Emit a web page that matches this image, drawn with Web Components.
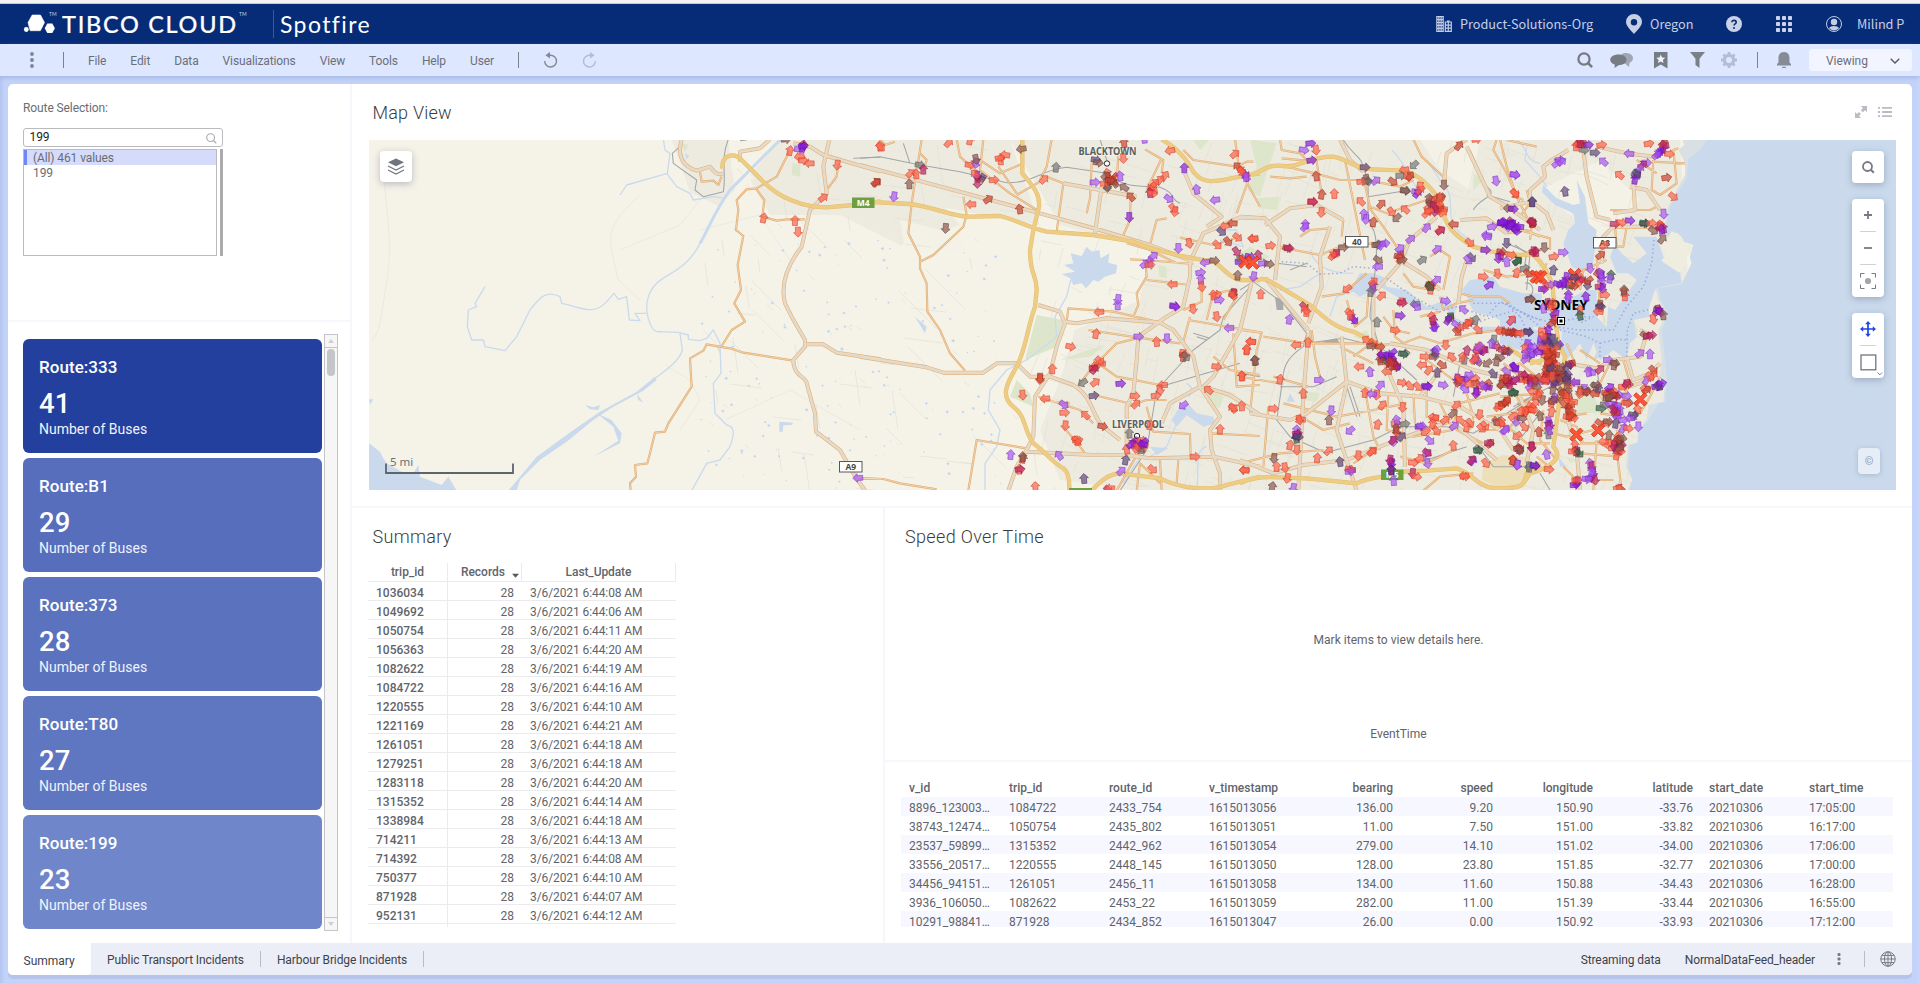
<!DOCTYPE html>
<html lang="en">
<head>
<meta charset="utf-8">
<title>Spotfire</title>
<style>
html,body{margin:0;height:100%;overflow:hidden}
body{font-family:Roboto,"Liberation Sans",sans-serif;font-size:12px;color:#61646b}
</style>
</head>
<body>
<spotfire-app></spotfire-app>
<script>
const define = (name, render, after) => customElements.define(name, class extends HTMLElement {
  connectedCallback() {
    if (this.shadowRoot) return;
    const t = document.createElement('template');
    t.innerHTML = render(this);
    this.attachShadow({mode: 'open'}).appendChild(t.content.cloneNode(true));
    if (after) after(this.shadowRoot, this);
  }
});

/* ---------- icons ---------- */
const ICONS = {
  logo: ['0 0 31 20', '<g fill="#fff"><circle cx="2.3" cy="15.500" r="2.400"/><path d="M8.2 1h8.300l4 7.6-2.200 4.300-2 3.800H6.2L4 8.6z" stroke="#fff" stroke-width=".6" stroke-linejoin="round"/><path d="M23.3 9.400h5l2.6 4.800-2.600 4.800h-5l-2.600-4.800z" stroke="#062c78" stroke-width="1" paint-order="stroke"/></g>'],
  kebab: ['0 0 4 16', '<g fill="#7f838d"><circle cx="2" cy="2" r="1.9"/><circle cx="2" cy="8" r="1.9"/><circle cx="2" cy="14" r="1.9"/></g>'],
  kebabSm: ['0 0 4 12', '<g fill="#777a80"><rect x=".5" width="3" height="3" rx="1"/><rect x=".5" y="4.5" width="3" height="3" rx="1"/><rect x=".5" y="9" width="3" height="3" rx="1"/></g>'],
  undo: ['0 0 14 16', '<path d="M5 3.2H7.6A5.9 5.9 0 1 1 1.7 9" fill="none" stroke="#858993" stroke-width="1.4"/><path d="M7 0v6.4L2.4 3.2z" fill="#858993"/>'],
  redo: ['0 0 14 16', '<path d="M9 3.2H6.4A5.9 5.9 0 1 0 12.3 9" fill="none" stroke="#b5bdd2" stroke-width="1.4"/><path d="M7 0v6.4l4.6-3.2z" fill="#b5bdd2"/>'],
  org: ['0 0 16 16', '<g fill="none" stroke="#c3cde3" stroke-width="1.2"><path d="M.8 15.4V.7h6.4v14.7zM.8 3.6h6.4M.8 6.5h6.4M.8 9.4h6.4M.8 12.3h6.4M2.9 .7v14.7M5.1 .7v14.7"/><path d="M9.3 15.4V6h6v9.4zM9.3 9.2h6M9.3 12.2h6M12.3 6v9M11 5.2h2.6"/></g>'],
  pin: ['0 0 16 20', '<path d="M8 0a8 8 0 0 1 8 8c0 4-5.500 9-8 12C5.500 17 0 12 0 8a8 8 0 0 1 8-8zm0 5a3.200 3.200 0 1 0 0 6.400A3.200 3.200 0 0 0 8 5z" fill="#c6cfe4"/>'],
  help: ['0 0 16 16', '<circle cx="8" cy="8" r="8" fill="#c9d2e6"/><path d="M5.800 6.200C5.800 3.700 10.200 3.800 10.200 6.200 10.200 7.900 8 7.700 8 9.600" fill="none" stroke="#062c78" stroke-width="1.600"/><circle cx="8" cy="12" r="1" fill="#062c78"/>'],
  apps: ['0 0 16 16', '<g fill="#c9d2e6">' + [0,6,12].map(y => [0,6,12].map(x => `<rect x="${x}" y="${y}" width="4" height="4" rx=".8"/>`).join('')).join('') + '</g>'],
  user: ['0 0 16 16', '<circle cx="8" cy="8" r="7.500" fill="none" stroke="#c3cde3"/><circle cx="8" cy="6" r="3.200" fill="#c3cde3"/><path d="M3 12.300c1.500-3 8.500-3 10 0A7 7 0 0 1 3 12.300z" fill="#c3cde3"/>'],
  searchBold: ['0 0 16 16', '<circle cx="7" cy="7" r="5.600" fill="none" stroke="#777b84" stroke-width="2.300"/><path d="M10.800 10.800l4.300 4.300" stroke="#777b84" stroke-width="2.600"/>'],
  chat: ['0 0 24 16', '<path d="M15.500 1c4.500 0 7.500 2.200 7.500 5.200 0 2-1.500 3.600-3.400 4.500L19 15l-4-3.500c-3-.2-5-4-5-6C10 2.500 13 1 15.500 1z" fill="#a0a6b4"/><path d="M8.500 2.400c4.600 0 8 2.200 8 5.400s-3.400 5.400-8 5.400l-4 2.800.4-3.300C2 11.800.2 10 .2 7.800c0-3.200 3.700-5.400 8.300-5.400z" fill="#777b84"/>'],
  bookmark: ['0 0 14 17', '<path d="M0 0h13.500v16.500L6.750 12.600 0 16.500z" fill="#777b84"/><path d="M6.750 2.500l1.300 3 3.200.3-2.400 2.100.7 3.200-2.800-1.700-2.800 1.700.7-3.200L2.300 5.800l3.200-.3z" fill="#eef2ff"/>'],
  funnel: ['0 0 15 16', '<path d="M0 0h15L9.500 6.800V16L5.500 13V6.800z" fill="#7b7f88"/>'],
  gear: ['0 0 16 16', '<circle cx="8" cy="8" r="4.600" fill="none" stroke="#b3bdd3" stroke-width="3.200"/><path d="M8 0v3M8 13v3M0 8h3M13 8h3M2.400 2.400l2 2M11.600 11.600l2 2M2.400 13.600l2-2M11.600 4.400l2-2" stroke="#b3bdd3" stroke-width="2.800"/>'],
  bell: ['0 0 14 17', '<path d="M7 0c4 0 5.500 3 5.500 6v4.500L14 12v1.500H0V12l1.500-1.500V6C1.500 3 3 0 7 0zM4.500 14.700h5c-.5 1.700-4.500 1.700-5 0z" fill="#868b98"/>'],
  chevron: ['0 0 10 6', '<path d="M.7.7L5 5 9.300.7" fill="none" stroke="#575b63" stroke-width="1.400"/>'],
  expand: ['0 0 12 12', '<g fill="#b9bcc2"><path d="M6 0h6v6L10 4.200 7.900 6.300 5.800 4.200 7.900 2z"/><path d="M0 12V6l2 1.900 1.900-2L6 8l-2 2 2 2z"/></g>'],
  list: ['0 0 14 10', '<g fill="#b9bcc2"><path d="M0 0h2v1.800H0zM4 0h10v1.800H4zM0 4.100h2v1.800H0zM4 4.100h10v1.800H4zM0 8.200h2V10H0zM4 8.200h10V10H4z"/></g>'],
  search: ['0 0 11 11', '<circle cx="4.600" cy="4.600" r="3.900" fill="none" stroke="#a7a9ad" stroke-width="1.100"/><path d="M7.500 7.500l2.800 2.800" stroke="#a7a9ad" stroke-width="1.200"/>'],
  mapSearch: ['0 0 13 13', '<circle cx="5.500" cy="5.500" r="4.500" fill="none" stroke="#777a82" stroke-width="1.800"/><path d="M8.800 8.800l3 3" stroke="#777a82" stroke-width="2"/>'],
  layers: ['0 0 16 17', '<path d="M8 .5l8 3.800-8 3.900-8-3.900z" fill="#6f747e"/><path d="M0 8l8 4 8-4M0 12l8 4 8-4" fill="none" stroke="#6f747e" stroke-width="1.200"/>'],
  plus: ['0 0 8 8', '<path d="M4 0v8M0 4h8" stroke="#777a82" stroke-width="1.800"/>'],
  minus: ['0 0 8 8', '<path d="M0 4h8" stroke="#777a82" stroke-width="1.800"/>'],
  target: ['0 0 16 16', '<circle cx="8" cy="8" r="3.100" fill="#a3a6ac"/><path d="M.5 4.500v-4h4M11.500.5h4v4M15.500 11.500v4h-4M4.500 15.500h-4v-4" fill="none" stroke="#777a82"/>'],
  move: ['0 0 16 16', '<path d="M8 1v14M1 8h14" stroke="#1f46e8" stroke-width="1.700"/><path d="M8 0l2.800 3.200H5.200zM8 16l2.800-3.200H5.200zM0 8l3.200-2.800v5.600zM16 8l-3.200-2.800v5.600z" fill="#1f46e8"/>'],
  square: ['0 0 22 22', '<rect x="1" y="1" width="14.800" height="14.800" fill="none" stroke="#666a73" stroke-width="1.200"/><path d="M17.500 18.500l2.300 2.300 2.300-2.300" fill="none" stroke="#777a82"/>'],
  globe: ['0 0 16 16', '<g fill="none" stroke="#777a80" stroke-width="1"><circle cx="8" cy="8" r="7.200"/><ellipse cx="8" cy="8" rx="3.500" ry="7.200"/><path d="M8 .8v14.400M.8 8h14.400M2 4.400h12M2 11.600h12"/></g>'],
  sort: ['0 0 8 5', '<path d="M0 .5h8L4 5z" fill="#555960"/>']
};
define('ui-icon', el => {
  const [vb, body] = ICONS[el.getAttribute('name')];
  const [, , w, h] = vb.split(' ');
  return `<style>:host{display:inline-block;flex:none;line-height:0}svg{display:block;overflow:visible}</style>
  <svg width="${el.getAttribute('w') || w}" height="${el.getAttribute('h') || h}" viewBox="${vb}">${body}</svg>`;
});

/* ---------- brand bar ---------- */
define('brand-bar', () => `<style>
:host{display:flex;align-items:center;height:40px;background:#062c78;color:#c6cfe4;font:12.700px/20px "Noto Sans CJK SC","Open Sans",sans-serif;box-sizing:border-box;padding-left:24px;white-space:nowrap}
.tm{font:5px/6px Lato,sans-serif;align-self:flex-start;margin-top:7px;width:8px}
.name{font:500 23.5px/30px Lato,sans-serif;color:#fff;width:177px;letter-spacing:1.7px;-webkit-text-stroke:.2px #fff}
.rule{width:1px;height:28px;background:#3a589a;margin:0 6px 0 26px}
.prod{font:400 23px/34px Lato,sans-serif;color:#fff;letter-spacing:1.4px}
.sp{flex:1}
.right{display:flex;align-items:center;width:484px}
.right span{flex:none}
</style>
<ui-icon name="logo"></ui-icon><span class="tm" style="width:8px;margin-left:-6px">TM</span><span class="name" style="margin-left:5px">TIBCO CLOUD</span><span class="tm">TM</span><span class="rule"></span><span class="prod">Spotfire</span><span class="sp"></span>
<div class="right"><ui-icon name="org"></ui-icon><span style="margin-left:8px;width:166px">Product-Solutions-Org</span><ui-icon name="pin"></ui-icon><span style="margin-left:8px;width:76px">Oregon</span><ui-icon name="help"></ui-icon><ui-icon name="apps" style="margin-left:34px"></ui-icon><ui-icon name="user" style="margin-left:34px"></ui-icon><span style="margin-left:15px">Milind P</span></div>`);

/* ---------- menu bar ---------- */
define('menu-bar', () => `<style>
:host{display:flex;align-items:center;height:32px;background:#dde7ff;color:#6b6f79;font-size:12px;box-sizing:border-box;padding:0 8px 0 30px;box-shadow:0 1px 5px rgba(90,115,180,.35);position:relative}
.rule{width:1px;height:16px;background:#7d8290}
nav{display:flex;gap:24px;margin:2px 24px 0 24px;letter-spacing:-.12px}
.sp{flex:1}
.view{display:flex;align-items:center;justify-content:space-between;width:103px;height:22px;box-sizing:border-box;padding:2px 12px 0 17px;background:#f2f5ff;border-radius:3px;margin-left:18px;letter-spacing:-.05px}
</style>
<ui-icon name="kebab"></ui-icon><span class="rule" style="margin-left:29px"></span>
<nav><span>File</span><span>Edit</span><span>Data</span><span>Visualizations</span><span>View</span><span>Tools</span><span>Help</span><span>User</span></nav>
<span class="rule"></span><ui-icon name="undo" style="margin-left:24px"></ui-icon><ui-icon name="redo" style="margin-left:26px"></ui-icon><span class="sp"></span>
<ui-icon name="searchBold"></ui-icon><ui-icon name="chat" style="margin-left:17px"></ui-icon><ui-icon name="bookmark" style="margin-left:20px"></ui-icon><ui-icon name="funnel" style="margin-left:22px"></ui-icon><ui-icon name="gear" style="margin-left:16px"></ui-icon><span class="rule" style="margin-left:20px"></span><ui-icon name="bell" style="margin-left:19px"></ui-icon>
<div class="view"><span>Viewing</span><ui-icon name="chevron"></ui-icon></div>`);

/* ---------- route filter ---------- */
define('route-filter', () => `<style>
:host{display:block;box-sizing:border-box;padding:16px 15px 0;letter-spacing:-.1px}
.t{line-height:16px;color:#6a6d73}
.in{display:flex;align-items:center;justify-content:space-between;box-sizing:border-box;width:200px;height:19px;margin-top:12px;border:1px solid #b9bbbf;border-radius:3px;padding:0 5.500px;color:#222;line-height:17px}
.row{display:flex;margin-top:2px;gap:3px}
.list{box-sizing:border-box;width:194px;height:107px;border:1px solid #b9bbbf;line-height:16px;color:#6a6d73}
.list div{padding-left:6px;border-left:3px solid transparent;height:15px}
.list .on{background:#d5dbfa;border-color:#7086f2}
.bar{width:3px;background:#ababab}
</style><div class="t">Route Selection:</div><div class="in"><span>199</span><ui-icon name="search" style="margin-top:1px"></ui-icon></div>
<div class="row"><div class="list"><div class="on">(All) 461 values</div><div>199</div></div><div class="bar"></div></div>`);

/* ---------- KPI tile ---------- */
define('kpi-card', el => `<style>
:host{display:block;height:114px;box-sizing:border-box;border-radius:6px;color:#fff;padding:17px 16px 0;background:${el.getAttribute('tint')}}
.a{font-weight:500;font-size:17px;line-height:22px;letter-spacing:.05px}.b{font-weight:500;font-size:27.500px;line-height:32px;margin-top:10px}.c{font-size:14px;line-height:18px;color:#f0f3fb;margin-top:0}
</style><div class="a"><slot name="route"></slot></div><div class="b"><slot name="value"></slot></div><div class="c">Number of Buses</div>`);

define('kpi-list', () => `<style>
:host{display:flex;gap:2px;padding:12px 0 0 15px;align-items:flex-start}
.cards{display:grid;gap:5px;width:299px;margin-top:5px}
.sb{display:flex;flex-direction:column;width:14px;height:597px;box-sizing:border-box;border:1px solid #c4c5c8;background:#f6f6f7}
.btn{display:flex;align-items:center;justify-content:center;height:12px;flex:none}
.up{border-bottom:1px solid #c4c5c8}.dn{border-top:1px solid #c4c5c8;margin-top:auto}
.th{width:8px;height:27px;border-radius:4px;background:#c4c6ca;margin:1px auto 0}
</style><div class="cards">` +
[['333',41,'#23409e'],['B1',29,'#576ebc'],['373',28,'#5b72be'],['T80',27,'#5f76c0'],['199',23,'#6f86ca']].map(([r,v,c]) => `<kpi-card tint="${c}"><span slot="route">Route:${r}</span><span slot="value">${v}</span></kpi-card>`).join('') +
`</div><div class="sb"><div class="btn up"><svg width="6" height="4"><path d="M3 0l3 4H0z" fill="#cfcfd2"/></svg></div><div class="th"></div><div class="btn dn"><svg width="6" height="4"><path d="M3 4l3-4H0z" fill="#cfcfd2"/></svg></div></div>`);

/* ---------- map geometry: four tiles, each in thirds of a pixel ---------- */
const TILE = {A: 360, B: 860, C: 1240, D: 1500};
const inTile = (k, body) => `<g transform="translate(${TILE[k]} 130) scale(.33333)">${body}</g>`;
const MAJOR = {
A: ['M1087 115C1085 75 1120 65 1145 90L1210 155C1260 205 1330 232 1400 232L1480 225 1562 214'],
B: ['M0 214L150 222C220 230 280 262 330 260L420 258C470 270 510 295 560 305L700 315 820 335C880 360 960 380 1060 395 1090 410 1100 440 1140 450L1200 450',
'M487 28L487 130C520 170 540 190 537 230L520 300 510 360C510 440 530 430 530 480L525 530C500 600 500 650 470 710 440 760 420 800 460 830 500 860 490 900 520 940 560 970 580 1000 610 1015Q630 1030 628 1082',
'M905 28C960 60 980 90 1000 125 1040 180 1100 140 1200 130','M695 1082Q740 1030 780 1030L900 1045C960 1075 1050 1085 1100 1065L1200 1040'],
C: ['M60 447L80 448C120 470 160 495 210 525 260 570 290 595 340 605L400 635 430 655','M40 130C60 130 80 100 130 108 180 115 200 80 280 80 330 90 340 115 400 118L490 122C540 135 580 180 605 220 610 290 650 320 700 350 760 370 830 380 880 372L905 400','M0 1060C60 1030 120 1045 200 1045L350 1060C390 1040 430 1045 490 1025L560 1022 650 1015C700 1030 710 1075 780 1075 860 1075 850 1060 860 1030L900 1000','M800 650L860 690 905 700'],
D: ['M95 370C130 400 150 440 158 470L165 560 175 640 195 680 180 800 160 950C190 980 160 1010 90 1030L70 1060','M90 700L130 690 175 650']};
const ART = {
A: ['M965 28C950 80 970 110 1010 122L1050 110Q1070 140 1090 130','M1408 28L1390 110 1400 190 1350 240 1325 350C1270 420 1265 480 1275 520L1295 560 1335 630 1335 650 1300 690C1300 740 1340 740 1340 760L1365 850 1368 905 1440 960 1480 1030 1515 1082','M1340 643L1390 643 1430 668 1562 688','M1300 40L1350 50 1390 75 1562 125','M1140 95L1140 65 1200 55 1230 28'],
B: ['M0 680L200 712 250 728 370 728 410 700 470 700 510 740 570 740 640 765C700 800 700 870 730 890L780 930','M0 105L150 145 540 250 720 300 870 345 1000 395','M520 920L525 800 570 730 590 650 615 580 600 545 535 525','M615 575L650 580 740 565 900 578 940 600 1000 680 1020 770','M500 965L700 975 800 975 870 985 1060 980 1200 1010','M835 620L830 690 820 790 800 830 800 960','M835 620L920 560 970 530 990 440 990 395 1030 310 1140 262 1200 265','M445 1082L470 1010 500 960 520 920','M725 170L705 310','M975 130L1000 190 1085 260 1040 290','M1020 770L930 820 905 880','M1020 770L1080 860 1050 900 1055 960 1080 1030 1080 1082','M1175 455L1140 600 1060 740 1030 770 1110 795 1200 855','M610 160L720 180 830 200'],
C: ['M0 260L75 265 120 320 105 450','M75 285L150 235 230 225 310 270','M270 290L240 380 245 470 205 580','M205 610L190 800 175 1082','M75 445L205 600','M305 620L320 760 290 900 350 1082','M400 490L400 620 490 830 495 1010','M320 755L200 850 150 870 30 850','M190 1005L320 990 470 930 640 870','M680 28L620 70 612 160','M680 50L750 200 810 235 900 300','M480 390L560 440 600 480','M410 480L480 400 510 330 590 260','M300 28L330 90 370 125','M450 640L560 660 700 720 780 740','M320 755L420 790 540 800 600 720','M0 990L100 1030 190 1005','M540 800L660 830 780 900 820 960','M660 270L740 265 800 310','M655 520L665 440 680 390','M640 880L700 930 770 990'],
D: ['M0 235L90 215 90 180 135 140 130 110 155 90 205 60','M95 215L140 250 160 300','M250 60L260 140 290 260 330 270','M290 50L380 70 460 80 500 50','M400 150L405 240 340 250','M390 170L440 180 480 240','M305 400L310 320 340 290 480 290','M200 700L290 715 340 690 420 680 440 610 420 600','M380 680L400 750 450 730','M190 750L300 790 350 870 360 960','M205 760L200 860 230 960 240 1082','M350 780L420 760 480 700','M60 800L100 900 80 1000','M0 740L80 750 170 740']};
const MINOR = {
A: ['M1190 175L1160 178 1130 210 1135 240 1128 300 1150 318 1133 405 1143 480 1123 520 1155 575 1115 600 1085 648','M1300 692L1150 668 1110 655 1040 643 1030 662 990 685 995 770 925 880 915 905 885 908 870 970 862 1000 825 1005 828 1040 810 1060 812 1082','M1190 178L1213 210 1207 260 1250 272 1280 268 1335 268','M1190 175L1250 140 1290 60','M1020 125L1025 155 1060 152 1075 165 1085 140','M1400 180L1430 140 1435 100','M1505 1045L1562 1047'],
B: ['M185 28L155 220 145 310 180 380 180 415 200 460 202 545 240 600 270 670 315 722','M180 395L220 375 310 290 320 255 310 200','M0 1045L70 1047 120 1060 230 1078','M325 1082L350 930 500 955','M60 28L75 45 105 35','M290 28L300 80 355 130','M370 28L360 120 450 190 530 240','M360 90L420 130 490 100','M575 28L560 110 540 150','M560 140L610 160 590 305','M470 195L540 155','M775 70L770 170','M695 100L690 205 680 250','M855 58L910 90 905 130','M812 200L810 270 790 315','M920 265L890 270 870 345','M810 388L855 390 1000 402','M855 390L860 440 830 490 835 525 820 560','M860 450L990 465','M620 575L625 535 760 545 890 575','M685 600L850 625 960 640','M655 765L700 710 770 640 830 625','M700 690L770 740 900 765','M700 795L830 825','M535 800L660 840 700 880','M545 810L630 820','M610 890L660 950 675 970','M800 830L860 810 920 810','M860 830L880 905 990 912 992 980','M1050 910L1200 918','M970 540L1025 515 1025 440','M985 570L1200 607','M1040 570L1060 490 1120 480','M1090 570L1130 500','M830 1082L840 1000 900 1060','M950 1060L955 990','M970 60L1000 90 1130 110 1160 95 1180 95','M1125 28L1135 100 1165 150 1130 250','M800 340L870 360 950 400','M905 85L860 180','M1120 610L1130 770 1200 765','M1060 680L1110 720 1200 735','M770 1082L810 1010 840 960','M960 323L1060 345 1140 320','M415 110L470 190','M180 70L200 90 190 125','M970 635L990 560','M900 990L905 1082'],
C: ['M120 28L125 60 180 70 200 90','M125 85L230 95 245 190','M130 108L225 130 300 150 380 150 480 170 520 150','M310 270L305 320','M90 140L150 145 200 140','M0 120L60 230','M110 350L240 375 300 350 400 340','M180 320L210 300 270 295','M315 90L375 390','M375 165L390 230 440 250 560 210','M385 230L430 290 470 350','M520 28L545 80 620 150','M770 28L760 60 800 130 830 200 850 210','M245 500L310 490 380 430','M320 510L345 590 380 560 385 490','M0 600L65 608 50 660 30 850','M70 620L200 640','M215 600L225 680 240 740','M100 740L205 770','M210 600L215 640 400 640','M130 820L290 860 400 840 500 820','M85 830L70 1010','M0 740L120 760','M340 680L380 650 470 640','M300 650L400 700','M375 780L400 920 420 960','M445 790L440 900 520 920 640 900','M520 790L525 880','M560 780L560 860 620 880','M640 820L650 900 730 940','M460 540L465 620 490 640 540 620 600 640','M430 560L460 600 510 610','M600 500L610 540 650 520 700 510','M600 640L700 610 780 600','M560 690L640 750','M600 820L640 900','M655 820L780 790','M680 790L700 860 690 900','M740 860L820 850 900 780','M720 900L800 900 860 840','M540 560L600 545','M490 430L520 470 580 480','M600 360L630 380 610 480','M570 380L600 360','M730 420L800 440 900 430','M800 310L860 300 900 320','M860 180L870 220 840 260','M660 490L700 500 780 500 810 520','M0 1000L120 970 250 960','M200 870L250 900 330 880','M340 1000L400 960','M480 980L560 1000 640 960','M550 1082L600 1040 700 1030'],
D: ['M0 28L20 110 50 200 95 290 90 330','M460 90L455 180 480 195 530 160 520 60 535 55','M455 95L555 100','M345 290L350 350 370 350 380 290','M330 240L450 240 470 230','M20 290L150 325 150 360','M200 640L225 700','M240 660L300 700','M410 90L470 130','M370 690L390 760 350 850','M300 850L370 860','M200 860L260 850','M240 940L350 940','M80 830L150 870','M0 870L80 940 150 940','M110 980L160 1020','M190 1010L230 1050 340 1050','M350 960L365 1082','M290 930L280 1082','M240 970L360 980','M30 760L60 820','M0 720L60 700 110 740','M10 700L60 740','M290 380L300 540','M120 440L140 400','M240 480L250 420 320 390','M20 30L110 50','M0 800L130 790','M300 760L330 700','M480 740L450 800 420 850','M120 900L200 920 280 900','M180 870L230 890 250 940','M130 840L120 930 170 990']};
const RAIL = {
A: ['M1105 28C1080 90 1100 130 1090 185L1030 200 1005 180 1010 150 940 100 937 70 960 50','M1480 85L1562 82','M1140 32L1160 30'],
B: ['M0 85L60 80 180 105 300 125 440 158C520 160 540 120 620 112L740 130C800 180 850 165 900 172 950 190 930 210 960 220','M130 40L150 100','M720 28L740 90','M780 1082L860 960 890 780 1000 660 1080 600 1090 560 1175 465','M900 770L1140 700','M1140 730L1200 740','M1000 610L1050 625M1010 620L1040 630'],
C: ['M0 480L40 455 130 520 200 610 190 650C130 690 130 720 125 770L110 870 150 920 250 965','M200 640L310 625 420 650 530 750','M310 30C340 80 370 80 370 120 C400 150 370 260 395 290C430 340 390 500 390 560L415 640','M385 200L450 190 510 180','M110 400L200 410M150 420L200 400','M690 60L740 170C780 200 720 200 700 240','M740 195L810 215','M250 970L400 930 480 890 620 890 700 910 900 790','M320 770L350 860M330 770L360 860','M530 1000L680 950','M120 770L220 770 290 740','M800 340L870 370 860 480','M660 700L640 800M700 930L760 1010 900 1010'],
D: ['M45 345L80 370 75 400','M75 460C100 450 110 500 80 500','M40 830L150 770','M50 940L120 850','M290 720L300 770','M120 1030L150 1080']};
const WATER_LINE = {
A: ['M1260 30L1180 110 1110 180C1060 250 1050 290 1020 340 980 420 920 430 890 460 860 490 855 530 865 565 875 600 885 607 900 605L955 607 985 615 985 628 1020 632 1040 625 1060 600 1080 640 1083 730 1060 760 1065 850 1100 885C1130 890 1120 920 1110 950L1080 990 1040 1000 995 1082','M375 470L345 520 350 530 325 540 322 590 335 630 370 630 375 650 435 662 470 620 510 540C540 500 560 480 600 500L605 520C660 530 700 560 740 515L762 490 775 508 800 500 808 570 840 572 825 550 858 550','M960 610L967 660C960 690 920 720 885 745','M910 28L915 60 930 70 922 130 800 165 780 195','M920 130L950 170 990 190 1000 210 1060 200 1095 205'],
B: ['M632 450L620 500 585 560 590 620 500 690 440 720 390 780 385 840 420 900 410 950 375 1000 375 1082','M980 760Q1010 780 985 800M870 980L920 950 950 880','M1060 300L1130 300 1150 350 1080 330','M1040 950C1000 960 1020 1010 1010 1082','M790 1060L840 980'],
C: ['M455 60C490 90 500 130 540 190M560 90L600 150C650 200 620 230 640 290L700 340','M340 430C240 430 220 390 210 360','M240 430L180 470 120 480','M900 100C850 90 870 60 830 28','M270 560L290 500 350 480'],
D: ['M80 50L75 90 120 140 140 170']};
const WATER_FILL = {
A: ['M445 1082L530 980 640 900 720 845 830 785 885 740 890 750 850 782 760 830 700 870 620 935 540 990 480 1050 470 1082Z','M710 850L755 870 785 910 780 940 700 980 775 932 760 890Z','M27 940L60 965 70 985 80 1000 125 1025 160 1030 175 1005 180 1040 245 1065 265 1040 290 1082 27 1082Z','M27 808L40 808 30 825Z','M675 825L700 832 720 825 715 840 690 838Z','M830 790L850 818 835 810Z','M1258 875L1300 878 1295 885 1270 886 1268 905 1258 905Z','M975 70L988 78 980 88Z'],
B: ['M605 432L645 425 612 405 640 400 632 370 665 378 680 350 695 365 718 360 722 385 748 370 745 398 772 405 768 430 735 440 715 455 700 450 678 475 665 460 640 465 630 445Z','M935 870Q960 820 985 822L1010 850 1060 860 1065 880 1030 890 980 855 950 890Z','M165 560L200 590 195 610Z','M870 950L925 955 890 975Z'],
C: ['M360 430L400 430 430 440 440 470 500 480 560 530 620 510 650 530 640 560 700 590 760 590 900 600 905 640 850 640 800 630 780 605 720 610 690 590 660 600 620 540 540 540 470 500 420 470 360 500 330 480Z','M690 450L760 440 780 470 850 490 905 490 905 590 820 590 760 560 700 545 680 500 665 480Z','M150 790L165 815 140 815Z','M800 640L880 620 870 660Z'],
D: ['M0 505L60 530 120 560 180 520 260 480 290 480 290 560 320 590 325 530 345 540 410 450 385 430 350 430 330 380 345 345 365 370 400 400 440 370 400 320 470 320 490 380 540 420 545 460 490 470 465 480 445 540 450 560 400 570 410 620 390 640 380 690 340 660 300 690 280 640 260 690 240 640 200 690 185 640 185 600 100 590 100 620 60 600 0 600Z','M130 165L170 205 220 225 240 220 230 150 255 200 265 280 290 300 280 400 250 430 215 410 190 340 205 300 225 280 220 250 165 225 125 185Z','M280 690L300 640 330 670Z','M0 590L90 600 110 640 60 660 0 640Z','M175 980L200 1010 180 1010Z']};
const GREEN = {
A: ['M1297 100L1322 105 1320 140 1295 135Z','M1070 650L1082 655 1078 672Z','M960 40L985 45 975 65Z'],
B: ['M530 555L610 570 590 650 495 690Z','M470 750L450 800 520 830 510 790Z','M600 690L700 655 735 645 690 680Z','M1050 780L1090 800 1080 835 1040 820Z','M895 405L920 410 920 445 898 440Z','M1000 30L1050 28 1020 60Z'],
C: ['M30 28L110 40 80 130 60 200 20 180 50 110Z','M50 205L120 200 110 240 60 235Z','M0 370L30 350 90 380 60 400Z','M340 620L380 600 395 640Z','M180 780L240 790 230 815 190 810Z','M700 130L730 150 700 180Z'],
D: ['M230 800L280 785 300 850 230 850Z','M400 560L415 610 400 600Z','M30 880L60 880 50 910 35 905Z','M305 530L320 580 310 580Z','M200 980L230 990 210 1000Z']};
const FERRY = {C: ['M125 395L200 400 240 432 300 430 340 410 400 415','M440 445L520 500 600 545 650 530 740 560 780 515 850 550 900 590','M650 600L760 560 830 540 900 570','M700 520L800 520 840 560'],
D: ['M462 330L455 400 430 470 380 530 340 600 240 600 160 590','M20 520L90 560 160 580','M380 680L382 600 400 550 450 538','M180 600L260 620 300 640 300 680','M300 640L350 628 380 630','M180 575L250 560 280 560 240 580','M60 560L80 600 60 640']};

/* vehicles: colour, heading, x, y  (n e s w, a=NE b=SE c=SW d=NW) */
const BUS = {
A: 'rn1290,62 mn1330,45 pe1318,58 Pn1328,52 Pe1330,48 rw1318,80 re1330,92 rw1348,100 be1278,28 rs1432,105 ra1390,203 Ra1550,157 rn1560,48 rn1211,264 rn1305,272 rs1314,306 pw1494,1044',
B: 'rb62,52 ra266,38 rn330,30 ge180,105 mn190,118 ra152,130 rn168,132 Ra48,157 bn148,162 ps102,200 bs257,295 Ra385,208 rw333,223 Rn479,237 re330,105 ps348,100 bs348,88 ke365,142 be362,148 Ps352,138 ms352,160 re402,150 rd345,132 rw435,75 rn422,90 re420,84 bw484,57 ra552,148 gn588,112 ke708,90 be715,98 pe705,157 rn742,130 mn745,150 Xn755,147 gs742,172 bs742,168 pn780,138 re735,160 bd792,172 rs790,85 Rn792,38 pn853,25 Rd812,200 Ps808,262 ra915,137 ra900,150 ra885,160 rc875,170 rb880,180 mn870,188 re878,190 pb927,206 rb940,235 rs945,245 ps955,355 rs988,340 pa880,378 pa855,402 pn870,395 re870,405 rw930,62 Pn973,114 pn1010,178 pw1065,210 ra1125,72 Rd1133,110 mb1155,132 rd1145,122 pd1158,140 kb1085,305 rw1095,288 Rw1117,280 rb1133,322 rw1178,326 Rb1104,335 rb1072,345 pw1035,397 be1064,392 bn1133,436 mb1130,365 Pe1140,395 ms1120,490 ge1145,385 pe1022,428 pn1023,448 rs1025,470 rw937,463 pn773,525 ps774,508 pe943,527 Pe945,530 rs999,537 rs1070,560 rw717,546 rn708,611 pe836,620 rn890,635 ps921,626 re632,650 rd970,670 re973,675 Rn970,680 gb978,680 rn577,717 rs540,748 Rs540,744 rc700,710 Re702,715 rw722,700 ma703,718 rb720,692 gc668,758 ra706,757 Pe782,761 ke702,797 re825,798 ra828,822 rw908,765 rs900,780 re888,797 rw555,806 pb612,824 re614,848 rd676,855 Re728,889 rs616,887 rb650,932 rd648,930 rc655,935 rs488,795 pc970,826 rn870,885 gn808,910 Pn828,935 re840,945 mn820,940 rw850,945 ps835,950 Rb845,955 gb840,960 kn797,990 rn800,958 pd597,976 pn452,974 Rn489,985 rn478,1018 bn488,980 me480,1018 pa784,1023 kn672,1046 rb878,1018 re1005,980 rn526,1070 mb745,1080 rw750,1075 rw1153,1020 rn1080,898 rd1045,780 rd1118,835 rb1120,833 rn1145,828 bn1184,692 rn1160,660 rw1172,635 rn1146,738 re1070,710 pw1107,594 re1070,494 pe1078,510 rn1060,495 Ra1120,490 rd1118,495',
C: 'rb5,125 pn18,140 Pe212,40 pe192,60 rs228,60 Pe215,91 Rn229,138 Rn245,193 rn283,191 re218,214 me218,216 rs244,247 pn196,283 pa195,290 pn372,252 ps378,268 Rn400,276 rw40,326 re92,347 Re143,354 me147,355 be310,352 ra285,372 ma288,370 ra278,376 ke375,112 ge380,152 bs380,148 ge383,155 pa408,152 re365,155 rd362,214 Ra424,222 Rb459,155 rb455,246 bc470,264 rd495,238 gc522,105 rw492,120 ge482,137 re505,140 Ra510,138 ge497,182 be495,182 pe530,185 Pa532,190 ra540,180 rd542,168 Rb575,225 ra578,220 re590,205 rw600,200 Pb590,238 ma590,245 rb565,240 gb575,220 ra560,250 pa560,293 ra600,300 ma602,302 Rw640,283 rb690,338 pa512,327 pa592,358 ge415,343 be410,345 pe435,340 pa425,345 bb415,390 pw413,410 ma480,375 Re477,380 ra482,388 pa480,355 be487,390 ga547,390 mn400,465 ps398,478 ra400,455 gn392,485 ra425,497 Pe30,380 Xn15,395 mn55,375 Xn38,398 pe70,400 be88,402 ps41,440 rc321,477 rn62,492 mb193,530 rn200,545 rd195,540 pn148,568 rn204,637 rw168,645 rw33,635 rn20,658 bn46,691 rn5,738 rn120,748 pe238,750 rn190,790 re101,836 ps274,842 bn267,870 rw182,868 rs178,870 Pa170,915 kn172,915 Gn168,925 pn170,900 me172,910 ke175,920 rn150,945 rs171,960 ra266,962 rn232,984 bs102,985 rn110,1010 rs135,1013 rs142,1045 rw13,1021 bn97,1070 ps160,1075 kn300,995 mw332,1020 re330,1018 pe330,1025 ra398,963 rs355,977 rb330,548 pd338,565 Pb342,570 rn330,555 gn411,576 re466,601 Ra570,466 Re572,465 pa590,450 rn572,478 Gb570,470 ra485,515 me487,518 gw525,522 pb530,530 Pe481,557 pe617,513 pd670,538 rn575,560 pn585,590 Ps582,590 mn580,570 Ra630,565 Ga630,560 Pa625,570 pb650,585 ra660,595 Ra685,580 re690,575 rc680,585 gn707,570 Rb652,605 rb715,600 rd380,630 rb400,640 be395,648 Re420,650 mb425,680 Ge430,690 Rn420,690 Ps450,685 ge495,670 Ge490,672 pb470,705 mb470,708 Pe468,712 Rn465,705 rw440,725 rw357,710 pn390,725 pa422,765 rs410,795 rn375,788 pw395,792 ra428,825 re487,758 rb510,768 rb535,770 Pe560,768 Pe563,770 pe610,765 rs488,832 pn583,665 ks585,670 pn590,660 be582,680 rw545,705 re555,680 ra567,720 Rb607,705 kn592,727 rs617,645 rd635,680 gn673,688 bd712,695 ra705,685 Pa730,660 ma733,662 pe710,690 me770,650 pb795,660 Pe800,665 be805,665 gs762,630 pn755,640 rw780,600 Re820,607 me815,607 ke865,605 Rw830,610 pa815,572 pn865,645 ke870,675 pb825,715 Pb822,712 kb760,732 bw785,765 Ra785,762 mw660,748 Pe675,748 pe665,760 re705,745 Re708,760 re725,768 pb675,778 ms710,785 Ps708,790 Re860,748 re850,750 Re880,748 Ra785,825 Ra795,820 ra775,830 ra800,815 re780,828 Gw820,788 ra650,825 ba640,850 Rb770,875 ge775,875 re780,880 rw580,862 ra585,865 Pe540,890 pe545,888 rb590,903 pb570,932 rn413,883 re468,880 pn470,870 ge495,882 bn468,895 Rs470,905 ps460,935 ma460,930 ka485,920 ra395,965 pc330,902 pa560,970 mb562,968 ra540,985 ps563,1000 re520,998 rn640,946 rd660,870 rb690,880 gb715,960 Ge715,960 Pa698,992 ma695,990 rb738,1000 rb735,888 pa795,900 rb725,895 Ra750,940 me748,940 pn453,995 Ps455,1000 ms450,990 kn455,1020 Mn453,1020 pn461,1052 ms518,1030 re530,1040 re675,1040 rw672,1037 Ra657,47 re710,28 pe825,135 ps768,153 bs612,165 rb825,192 kn876,215 pe757,290 pw740,315 Pe737,360 re730,440 kb695,383 pb685,390 Pa748,465 rs773,432 be872,508 bw805,235 Pe820,237 Pe812,285 pa810,290 Pa815,280 mn810,275 ke805,285 Rn877,276 mb875,280 pw740,320 Re785,365 mn783,375 Ps775,385 re815,375 pn800,395 ks800,340 Ga833,393 ge855,415 Rb865,430 Xn890,440 Re882,365 ms880,365 rn830,428 rs855,845 rn870,830 Re835,955 ms838,960 ms875,950 rn819,990 ps832,1005 gs867,1010 ke885,1008 ra865,840 rn878,835',
D: 're305,45 Ra235,38 re240,45 Rn250,40 Pe265,45 ge252,60 ke285,68 rn228,48 mn240,38 pe180,90 pa170,100 pa185,95 pd310,95 pw387,71 re447,41 Pn490,55 Pa482,65 Pa476,70 Ra490,40 mb495,45 pa470,75 re508,72 rd358,135 Re500,143 rb520,200 pe440,98 ma428,105 pa420,115 Pa410,135 ga408,130 Pn405,148 kb410,132 pe45,134 rb45,190 kn97,216 kn195,184 Rn96,278 mb97,276 ps491,252 Pe390,272 me345,282 re365,278 ke435,280 Ge433,280 re455,280 Rs480,290 bb460,302 ma480,290 mn490,295 rn480,285 Pn485,298 ba487,327 ra313,345 Ra302,375 bs133,353 mn108,365 re162,380 pe190,367 Ga52,393 kn160,420 Xn121,442 Xn224,435 ps270,415 rb245,445 me240,450 re230,460 Ge210,465 Pe185,465 Pe175,462 pe150,465 ge212,468 Re222,468 Pn205,495 pn205,505 Pn258,500 pb300,430 Rw295,430 Ps305,440 Gn333,435 pn330,445 ps305,450 me300,470 Ps308,475 re315,495 pn302,430 Rn373,485 rn375,498 bn372,480 Rn300,530 bs300,525 ke302,530 rw295,545 rn240,540 Gn240,556 pn130,535 ms145,520 ra135,470 Pe130,478 be90,508 rn160,520 rd155,535 Pa165,550 ms162,570 Ra155,580 ke475,540 Pa472,545 ms475,540 Pd480,545 bn490,555 rs460,568 bb435,617 me455,615 me445,618 pa420,670 pn450,672 ra35,570 re5,605 Re30,608 Re20,605 ke85,607 re60,610 re130,602 pd85,640 pb90,670 Pn145,600 pb275,725 pn265,725 ma300,718 pe325,690 be345,700 bn343,705 Ra215,702 me210,703 Rb460,720 ra460,735 pa440,750 rb450,740 Pn478,765 Pe470,770 kb475,770 Pe485,760 rw435,775 Re385,762 re370,770 ma380,760 Rn325,790 Re320,788 gb285,770 kn295,775 be290,765 rs330,800 pd255,775 Pw225,757 re200,745 rb205,765 pe355,795 Pe345,798 Ms345,830 re340,785 pe380,798 be385,818 re380,820 Ps350,850 rn413,838 Ra440,780 Xn421,808 gc402,858 ke400,855 ps415,890 pw390,865 pe370,870 pn360,840 kn347,880 pa370,895 re385,895 Ge303,835 ge315,825 bn327,915 Rb300,880 re320,880 be325,875 Xn294,901 rn225,945 Xn229,914 Rb228,965 ms230,965 re220,965 Gb238,970 rn355,920 bn358,935 Re355,950 Rn358,960 re340,955 ra325,940 Ms350,960 rn350,975 Gb355,935 rw310,935 pn270,1000 ms275,1010 Ps280,1030 Pe270,1045 pe260,1048 ms285,1050 pn275,1025 Ps232,1055 ms228,1060 Pe225,1065 re230,1050 Rd360,1075 re355,1075 Rn205,835 Rd215,855 re220,865 rb195,790 Rb205,800 bb185,785 Rn208,840 re100,840 rn75,845 ra105,820 bn120,857 rn155,845 ps145,875 Ps150,885 ms145,890 gn145,912 Rn117,905 pn148,900 Rb60,955 bb58,960 ms95,952 pn140,973 re147,1018 Rn38,990 ps52,1005 gn88,1012 Pe105,1007 pa17,898 Ge40,788 Re10,820 Ra20,812 rn5,875 pb20,725 Pb45,712 pw45,750 Re10,660'};
const TINT = {r: ['#ff5f45','#cf3a26'], R: ['#cc3f2c','#962a1c'], p: ['#a653f2','#7d2fc4'], P: ['#8718dc','#6210a4'], b: ['#8a554c','#653a34'], g: ['#757575','#575757'], k: ['#5e447c','#432e5c'], G: ['#2f6045','#1f4330'], m: ['#bd1f62','#8e1548'], M: ['#7f1c8c','#5e1268']};
const HEAD = {n: 0, a: 45, e: 90, b: 135, s: 180, c: 225, w: 270, d: 315};
let seed = 7;
const rnd = () => (seed = (seed * 16807) % 2147483647) / 2147483647;
const bus = (c, a, x, y) => c === 'X'
  ? `<path transform="translate(${x} ${y})" d="M-20-12l8-8 12 12 12-12 8 8-12 12 12 12-8 8-12-12-12 12-8-8 12-12z" fill="#ff4a2c" stroke="#c92b14" stroke-width="2.500" opacity=".93"/>`
  : `<path transform="translate(${x} ${y}) rotate(${a})" d="M0-15.500L13.500-2H7.500V14.500H-7.500V-2H-13.500Z" fill="${TINT[c][0]}" stroke="${TINT[c][1]}" stroke-width="2.200" fill-opacity=".68" stroke-opacity=".7"/>`;
const buses = k => BUS[k].split(' ').map(s => {
  const [x, y] = s.slice(2).split(',').map(Number);
  return bus(s[0], HEAD[s[1]] + Math.round(rnd() * 24 - 12), x, y);
}).join('');
/* busy corridors in the city centre */
const SWARM = [['D',150,640,30,25,22,'rRPmkpg'],['D',152,700,14,45,34,'rRmRrR'],['D',120,745,50,12,18,'rRmpr'],['D',175,735,35,28,18,'rRpbk'],['D',100,665,30,25,8,'pPpr'],['D',185,800,30,25,9,'rbRr'],['D',210,830,12,40,5,'rR'],['D',340,815,18,45,10,'PmRp'],['D',120,800,50,40,8,'rbpr'],['D',350,945,16,22,8,'rRmb'],['D',20,755,25,8,6,'rRm'],['D',30,285,28,18,10,'PPpk'],['C',585,225,28,22,12,'rRmrb'],['C',720,680,60,30,10,'rpPmb'],['C',440,685,22,25,8,'mRPG'],['C',700,755,50,20,8,'rpPR'],['C',850,880,30,40,6,'rrbp'],['C',640,880,90,30,6,'rrrp'],['D',300,790,60,20,8,'rRkb'],['D',235,455,45,14,6,'PrRk'],['B',752,150,14,14,4,'Rrb'],['B',832,945,20,14,6,'PRrm']];
const swarm = SWARM.map(([k, x, y, rx, ry, n, pal]) => inTile(k, Array.from({length: n}, () => bus(pal[Math.floor(rnd() * pal.length)], Math.floor(rnd() * 8) * 45 + 8, Math.round(x + (rnd() * 2 - 1) * rx), Math.round(y + (rnd() * 2 - 1) * ry))).join(''))).join('');
const layer = (set, attrs) => Object.keys(set).map(k => inTile(k, `<path d="${set[k].join('')}" ${attrs}/>`)).join('');
const speckle = (() => {
  let s = '';
  for (let i = 0; i < 150; i++) { const x = 700 + rnd() * 300, y = 240 + rnd() * 245, r = .4 + rnd() * 1.1; s += `M${x.toFixed(1)} ${y.toFixed(1)}l${(r * 1.6).toFixed(1)} ${(-r).toFixed(1)} ${r.toFixed(1)} ${(r * 1.3).toFixed(1)} ${(-r).toFixed(1)} ${r.toFixed(1)}z`; }
  return s;
})();
const streets = (() => {
  let s = '';
  for (let i = 0; i < 620; i++) {
    const x = 1040 + rnd() * 600, y = 140 + rnd() * 350, t = (rnd() < .5 ? .15 : 1.7) + rnd() * .3, l = 8 + rnd() * 26;
    s += `M${x.toFixed(0)} ${y.toFixed(0)}l${(Math.cos(t) * l).toFixed(0)} ${(Math.sin(t) * l).toFixed(0)}`;
  }
  for (let i = 0; i < 90; i++) { const x = 700 + rnd() * 340, y = 140 + rnd() * 350, l = 10 + rnd() * 30; s += `M${x.toFixed(0)} ${y.toFixed(0)}l${(rnd() < .5 ? l : l * .15).toFixed(0)} ${(rnd() < .5 ? l * .12 : l).toFixed(0)}`; }
  return s;
})();
const shield = (x, y, t, green) => `<rect x="${x}" y="${y}" width="22.500" height="10.500" fill="${green ? '#6da03f' : '#fff'}" stroke="${green ? 'none' : '#55585c'}"/><text x="${x + 11.300}" y="${y + 8.400}" text-anchor="middle" font-size="8.500" font-weight="700" fill="${green ? '#fff' : '#4a4a4a'}">${t}</text>`;
const mapSvg = () => `<svg viewBox="369 140 1527 350" width="1527" height="350" font-family="'Noto Sans','Open Sans',sans-serif">
<rect x="369" y="140" width="1527" height="350" fill="#f5f3e8"/>
<path d="M672 140L728 140 735 190 718 206 690 192zM750 175L780 140 1010 140 1040 225 930 205 800 215zM1010 140L1680 140 1700 490 1130 490 1060 480 1040 430 1060 380 1075 330 1140 300 1150 250 1060 225zM845 140L905 160 960 225 900 245 840 215 770 215 750 180z" fill="#edebe0"/>
<path d="M1420 140L1480 140 1470 190 1440 170zM1540 190L1600 160 1640 200 1600 240zM900 220L960 235 965 250 905 250z" fill="#f4f2e6"/>
<path d="${streets}" stroke="#e3e1d6" stroke-width=".7" fill="none"/>
<path d="M385 150C380 190 395 230 387 280S380 330 371 342M640 195C600 230 610 240 618 280L640 300M700 230L760 215 790 260M620 250L680 225 700 200M680 430L700 400 690 380 665 365M725 420L790 390 860 430" stroke="#eceadf" stroke-width="1" fill="none"/>
${layer(GREEN, 'fill="#dde6ca"')}
<path d="${speckle}" fill="#c3d6f0"/>
${inTile('D', '<path d="M1190 28H548L552 45 536 60 555 100V135L525 190 500 240 492 310 520 340 530 302 550 335 580 345 570 380 575 400 545 462 500 470 468 480 475 510 500 555 475 600 485 690 480 740 495 760 490 815 445 825 440 870 412 900 415 935 385 945 378 1010 397 1050 385 1082H1190Z" fill="#d8e0e4"/><path d="M1190 28H620Q600 70 565 85L560 145 535 185 515 220 505 245 495 310 520 340 530 305 555 335 580 345 570 380 575 400 545 462 475 475 480 505 505 555 485 600 495 690 500 740 497 815 475 820 445 870 418 900 412 940 390 945 385 1010 397 1050 385 1082H1190Z" fill="#cadaec"/>')}
${layer(WATER_FILL, 'fill="#cadaec"')}
${inTile('D', '<path d="M470 318L500 330 515 303 545 320 552 340 578 345 572 370 560 378 560 400 538 428 510 410 484 392 500 372 480 345Z" fill="#efeddf"/>')}
${layer(WATER_LINE, 'fill="none" stroke="#c9daef" stroke-width="4" stroke-linejoin="round"')}
${inTile('A', '<path d="M1260 30L1180 110 1110 180C1060 250 1050 290 1020 340" fill="none" stroke="#c9daef" stroke-width="9"/>')}
${inTile('C', '<path d="M730 1000L790 975 855 980 860 1030 845 1065 780 1075 725 1050Z" fill="#eedfbb"/><path d="M245 635L290 625 300 640 270 642ZM105 500L130 510 130 540 110 540ZM830 820L900 785 905 800 835 828Z" fill="#a9acad"/>')}
${layer(RAIL, 'fill="none" stroke="#a3a6a8" stroke-width="3.200" stroke-linejoin="round"')}
${layer(MINOR, 'fill="none" stroke="#e3ac70" stroke-width="6.500" stroke-linejoin="round"')}
${layer(ART, 'fill="none" stroke="#e3b07a" stroke-width="12" stroke-linejoin="round"')}
${layer(MINOR, 'fill="none" stroke="#f3e4cc" stroke-width="2" stroke-linejoin="round"')}
${layer(ART, 'fill="none" stroke="#e4dac7" stroke-width="8.500" stroke-linejoin="round"')}
${layer(MAJOR, 'fill="none" stroke="#e7bd6a" stroke-width="13" stroke-linejoin="round"')}
${layer(MAJOR, 'fill="none" stroke="#edcc85" stroke-width="10" stroke-linejoin="round"')}
${layer(FERRY, 'fill="none" stroke="#8f9fdd" stroke-width="4.500" stroke-dasharray="4.500 8" opacity=".8"')}
<g font-weight="700" fill="#5a5e62" stroke="#f3f1e6" stroke-width="2" paint-order="stroke" stroke-linejoin="round"><text x="1078.500" y="155" font-size="10" textLength="58" lengthAdjust="spacingAndGlyphs">BLACKTOWN</text><text x="1112" y="428" font-size="10" textLength="52" lengthAdjust="spacingAndGlyphs">LIVERPOOL</text></g>
<text x="1534" y="309.500" font-size="14" font-weight="700" fill="#000" textLength="54" lengthAdjust="spacingAndGlyphs">SYDNEY</text>
<g fill="#fff" stroke="#222"><circle cx="1107" cy="163.500" r="2.700"/><circle cx="1137" cy="436" r="2.700"/></g>
${shield(852, 197.500, 'M4', 1)}${shield(839.500, 461.500, 'A9')}${shield(1345.500, 236.500, '40')}${shield(1593.500, 237.500, 'A8')}${shield(1381, 469.500, 'M5', 1)}<rect x="1069" y="488" width="23" height="3" fill="#6da03f"/>
${Object.keys(BUS).map(k => inTile(k, buses(k))).join('')}${swarm}
<rect x="1557.500" y="317.500" width="7" height="7" fill="#fff" stroke="#000"/><rect x="1559.500" y="319.500" width="3" height="3"/>
<path d="M386 463.500v9.500h127v-9.500" fill="none" stroke="#5e646c" stroke-width="1.800"/>
<text x="390" y="466" font-size="11.500" fill="#6a6e76">5 mi</text></svg>`;

define('map-view', () => `<style>
:host{display:block;box-sizing:border-box;padding:16px 16px 0 17px}
header{display:flex;align-items:center;height:24px;padding:0 4px 0 3.500px;justify-content:space-between}
h2{margin:2px 0 0;font-weight:300;font-size:18px;line-height:26px;color:#3a3c40;letter-spacing:.2px}
.ic{display:flex;align-items:center;gap:11px;margin-top:-1px}
.map{position:relative;margin-top:16px;height:350px;width:1527px}
svg{display:block}
.btn{position:absolute;background:#fff;border-radius:4px;box-shadow:0 2px 7px rgba(70,80,110,.35);display:flex;flex-direction:column;align-items:center;box-sizing:border-box}
.l{left:11px;top:11px;width:32px;height:31px;justify-content:center}
.s{right:12px;top:11px;width:32px;height:32px;justify-content:center}
.z{right:12px;top:59px;width:32px;height:98px;padding:12px 0 0}
.m{right:12px;top:173px;width:32px;height:65px;padding:8px 0 0}
.c{right:16px;top:308px;width:22px;height:26px;justify-content:center;background:#e6edf7;color:#8d99a8;font-size:11px;box-shadow:0 1px 5px rgba(70,80,110,.25)}
hr{width:16px;height:1px;border:0;margin:12px 0;flex:none;background:#cfd1d6}
</style><header><h2>Map View</h2><div class="ic"><ui-icon name="expand"></ui-icon><ui-icon name="list"></ui-icon></div></header>
<div class="map">${mapSvg()}
<div class="btn l"><ui-icon name="layers"></ui-icon></div><div class="btn s"><ui-icon name="mapSearch"></ui-icon></div>
<div class="btn z"><ui-icon name="plus"></ui-icon><hr><ui-icon name="minus"></ui-icon><hr style="margin-bottom:8px"><ui-icon name="target"></ui-icon></div>
<div class="btn m"><ui-icon name="move"></ui-icon><hr style="margin:8px 0 8px"><ui-icon name="square" style="margin-left:5.500px"></ui-icon></div>
<div class="btn c">©</div></div>`);

/* ---------- summary cross table ---------- */
const TRIPS = '1036034 08,1049692 06,1050754 11,1056363 20,1082622 19,1084722 16,1220555 10,1221169 21,1261051 18,1279251 18,1283118 20,1315352 14,1338984 18,714211 13,714392 08,750377 10,871928 07,952131 12'.split(',').map(s => s.split(' '));
define('summary-table', () => `<style>
:host{display:block;box-sizing:border-box;padding:16px 0 0 16px}
h2{margin:0 0 13px 4.500px;font-weight:300;font-size:18px;line-height:26px;color:#3a3c40;letter-spacing:.3px}
.t{width:308px;height:364px}
.r{display:grid;grid-template-columns:80px 74px 154px;height:19px;line-height:23px;box-sizing:border-box;border-bottom:1px solid #ebebed}
.r>*{box-sizing:border-box;height:19px;border-right:1px solid transparent;white-space:nowrap}
.r>:first-child{border-color:#ebebed;padding-left:8px;font-weight:500}
.r>:nth-child(2){text-align:right;padding-right:7px}.r>:nth-child(3){padding-left:8px;letter-spacing:-.09px}
.h{font-weight:500;line-height:19px}.h>*{border-color:#ebebed!important;text-align:center!important;padding:0!important}
.h>:nth-child(2){display:flex;justify-content:flex-end;align-items:center;gap:7px;padding-right:2px!important}
.tail{height:3px;border:0}.tail>*{height:3px}
</style><h2>Summary</h2><div class="t"><div class="r h"><span>trip_id</span><span>Records<ui-icon name="sort" w="7" style="margin-top:5px"></ui-icon></span><span>Last_Update</span></div>` +
TRIPS.map(([a, s]) => `<div class="r"><span>${a}</span><span>28</span><span>3/6/2021 6:44:${s} AM</span></div>`).join('') + `<div class="r tail"><span></span></div></div>`);

/* ---------- speed chart ---------- */
define('speed-chart', () => `<style>
:host{display:flex;flex-direction:column;box-sizing:border-box;padding:16px 0 0}
h2{margin:0 0 0 20px;font-weight:300;font-size:18px;line-height:26px;color:#3a3c40;letter-spacing:.34px}
p{margin:0;text-align:center;line-height:16px}
.a{margin-top:82px;letter-spacing:.04px}.b{margin-top:78px}
</style><h2>Speed Over Time</h2><p class="a">Mark items to view details here.</p><p class="b">EventTime</p>`);

/* ---------- vehicle records ---------- */
const COLS = ['v_id','trip_id','route_id','v_timestamp','bearing','speed','longitude','latitude','start_date','start_time'];
const ROWS = `8896_123003… 1084722 2433_754 1615013056 136.00 9.20 150.90 -33.76 20210306 17:05:00
38743_12474… 1050754 2435_802 1615013051 11.00 7.50 151.00 -33.82 20210306 16:17:00
23537_59899… 1315352 2442_962 1615013054 279.00 14.10 151.02 -34.00 20210306 17:06:00
33556_20517… 1220555 2448_145 1615013050 128.00 23.80 151.85 -32.77 20210306 17:00:00
34456_94151… 1261051 2456_11 1615013058 134.00 11.60 150.88 -34.43 20210306 16:28:00
3936_106050… 1082622 2453_22 1615013059 282.00 11.00 151.39 -33.44 20210306 16:55:00
10291_98841… 871928 2434_852 1615013047 26.00 0.00 150.92 -33.93 20210306 17:12:00`.split('\n').map(l => l.split(' '));
define('record-table', () => `<style>
:host{display:block;padding:16px 0 0 16px}
.t{width:992px}
.r{display:grid;grid-template-columns:repeat(9,100px) 92px;height:19px;line-height:22px}
.r span{padding:0 8px;white-space:nowrap}
.r :nth-child(n+5):nth-child(-n+8){text-align:right}
.r:nth-child(even){background:#f7f8ff}
.r:last-child{height:16px}
.h{font-weight:500;line-height:20px}.h span{padding-right:8px}
</style><div class="t"><div class="r h">${COLS.map(c => `<span>${c}</span>`).join('')}</div>${ROWS.map(r => `<div class="r">${r.map(c => `<span>${c}</span>`).join('')}</div>`).join('')}</div>`);

/* ---------- page tabs ---------- */
define('page-tabs', () => `<style>
:host{display:flex;align-items:center;height:32px;background:#ebeef7;color:#3f4248;border-radius:0 0 5px 5px;line-height:36px;white-space:nowrap;letter-spacing:-.1px}
:host>span{height:34px}
.on{background:#fff;width:83px;padding-left:15.500px;box-sizing:border-box;border-radius:0 0 4px 5px;letter-spacing:0}
:host>.on{height:32px;line-height:34px;padding-top:1px}
:host>.rule{width:1px;height:16px;background:#b9bcc5}
.sp{flex:1}
</style><span class="on">Summary</span><span style="margin:0 16px">Public Transport Incidents</span><span class="rule"></span><span style="margin:0 16px">Harbour Bridge Incidents</span><span class="rule"></span><span class="sp"></span>
<span style="margin-right:24px">Streaming data</span><span>NormalDataFeed_header</span><ui-icon name="kebabSm" style="margin-left:22px"></ui-icon><span class="rule" style="margin:0 15px 0 23px"></span><ui-icon name="globe" style="margin-right:16px"></ui-icon>`);

/* ---------- application shell ---------- */
define('spotfire-app', () => `<style>
:host{display:flex;flex-direction:column;width:1920px;height:983px;background:linear-gradient(90deg,#b3c5ef 0,#c3d2f8 5px,#c3d2f8 calc(100% - 5px),#c8d6fb 100%);overflow:hidden}
.strip{height:4px;flex:none;background:#f3f3f3;border-bottom:1px solid #c9c9c9;box-sizing:border-box}
brand-bar,menu-bar{flex:none}
main{margin:8px 8px 0;width:1904px;height:891px;background:#fff;border-radius:5px;box-shadow:0 4px 0 #b5c4e8;display:flex;flex-direction:column}
.body{display:flex;flex:1;min-height:0}
.side{width:342px;border-right:2px solid #f6f6fd}
.side route-filter{border-bottom:2px solid #f6f6fd;height:238px}
.content{flex:1}
map-view{border-bottom:2px solid #f6f6fd;height:424px}
.low{display:flex;height:435px}
summary-table{border-right:2px solid #f6f6fd;width:533px}
.rt{flex:1}
speed-chart{border-bottom:2px solid #f6f6fd;height:254px}
</style><div class="strip"></div><brand-bar></brand-bar><menu-bar></menu-bar>
<main><div class="body"><div class="side"><route-filter></route-filter><kpi-list></kpi-list></div>
<div class="content"><map-view></map-view><div class="low"><summary-table></summary-table><div class="rt"><speed-chart></speed-chart><record-table></record-table></div></div></div></div>
<page-tabs></page-tabs></main>`);
</script>
</body>
</html>
